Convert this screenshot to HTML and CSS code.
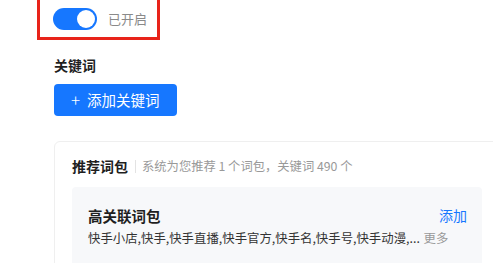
FILE: index.html
```html
<!DOCTYPE html>
<html lang="zh-CN">
<head>
<meta charset="utf-8">
<link rel="stylesheet" href="styles.css">
</head>
<body>
<div class="page">
  <div class="highlight">
    <div class="switch-row">
      <span class="switch"><span class="knob"></span></span>
      <span class="switch-label">已开启</span>
    </div>
  </div>
  <div class="field-label">关键词</div>
  <button class="btn-primary"><span class="plus">+</span>添加关键词</button>
  <div class="card">
    <div class="card-head">
      <span class="card-title">推荐词包</span>
      <span class="divider"></span>
      <span class="card-sub">系统为您推荐 1 个词包，关键词 490 个</span>
    </div>
    <div class="pack">
      <div class="pack-top">
        <span class="pack-name">高关联词包</span>
        <span class="pack-add">添加</span>
      </div>
      <div class="pack-words">快手小店,快手,快手直播,快手官方,快手名,快手号,快手动漫,... <span class="more">更多</span></div>
    </div>
  </div>
</div>
</body>
</html>
```

FILE: styles.css
```css
html, body {
  margin: 0;
  padding: 0;
  background: #ffffff;
  overflow: hidden;
  font-family: "Noto Sans CJK SC", "Noto Sans", sans-serif;
  color: #222222;
}
.page {
  width: 493px;
  height: 263px;
  overflow: hidden;
  padding-left: 54px;
  box-sizing: border-box;
}
.highlight {
  margin-left: -17px;
  margin-top: -12px;
  width: 104px;
  height: 29px;
  border: 3px solid #e8231a;
  padding: 17px 0 0 13px;
  box-sizing: content-box;
}
.switch-row {
  display: flex;
  align-items: center;
  gap: 11px;
}
.switch {
  width: 44px;
  height: 22px;
  border-radius: 11px;
  background: #1677ff;
  display: flex;
  align-items: center;
  justify-content: flex-end;
  padding-right: 2px;
  box-sizing: border-box;
}
.knob {
  width: 18px;
  height: 18px;
  border-radius: 50%;
  background: #ffffff;
}
.switch-label {
  font-size: 13px;
  color: #8a8a8a;
  line-height: 20px;
}
.field-label {
  margin-top: 15px;
  font-size: 14px;
  font-weight: 700;
  line-height: 20px;
  color: #1f1f1f;
}
.btn-primary {
  margin-top: 9px;
  display: flex;
  align-items: center;
  height: 32px;
  width: 123px;
  padding: 0 0 0 17px;
  border: none;
  border-radius: 4px;
  background: #1677ff;
  color: #ffffff;
  font-family: inherit;
  font-size: 14.5px;
  line-height: 20px;
}
.plus {
  font-size: 17px;
  margin-right: 7px;
  font-weight: 300;
}
.card {
  margin-top: 25px;
  width: 445px;
  box-sizing: border-box;
  border: 1px solid #efefef;
  border-radius: 6px;
  padding: 13px 16px 0 17px;
  height: 140px;
}
.card-head {
  display: flex;
  align-items: center;
  height: 22px;
}
.card-title {
  font-size: 14px;
  font-weight: 700;
  color: #1f1f1f;
}
.divider {
  width: 1px;
  height: 13px;
  background: #e3e3e3;
  margin: 0 6px 0 7px;
}
.card-sub {
  font-size: 12.3px;
  color: #999999;
}
.pack {
  margin-top: 10px;
  background: #f7f8fa;
  border-radius: 4px;
  padding: 16px 15px 0 16px;
  height: 100px;
}
.pack-top {
  display: flex;
  justify-content: space-between;
  align-items: center;
  height: 24px;
}
.pack-name {
  font-size: 14.5px;
  font-weight: 700;
  color: #1f1f1f;
}
.pack-add {
  font-size: 14px;
  color: #1677ff;
}
.pack-words {
  margin-top: 1px;
  font-size: 12.4px;
  line-height: 20px;
  color: #333333;
  white-space: nowrap;
}
.more {
  color: #999999;
  margin-left: 1px;
}
```
